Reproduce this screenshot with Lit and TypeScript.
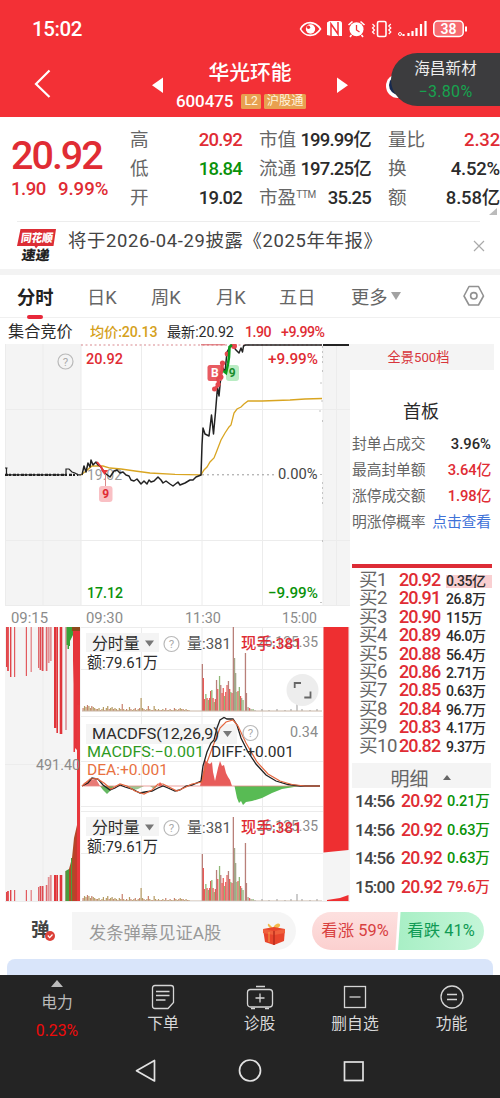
import { LitElement, html, svg, css } from "lit";
import { customElement } from "lit/decorators.js";

const RED = "#e02c34";
const GREEN = "#0a920a";
const INK = "#2b2b2b";
const GREY = "#8b8b8b";

/* Chart label: x, baseline y, drawn width, font size, colour, text. */
const label = (x: number, y: number, w: number, size: number, fill: string, s: string, weight = 400) =>
  svg`<text x=${x} y=${y} textLength=${w} lengthAdjust="spacingAndGlyphs" font-size=${size} font-weight=${weight} fill=${fill}>${s}</text>`;

const question = (x: number, y: number) => svg`
  <circle cx=${x} cy=${y} r="7.5" fill="none" stroke="#b9b9b9" stroke-width="1.2"/>
  <text x=${x} y=${y + 4} text-anchor="middle" font-size="11.5" fill="#aaa">?</text>`;

/* Volume bars: [x, height, colour index]. */
const VOL: [number, number, number][] = [
  [202.3, 47, 2], [203.3, 33, 0], [204.5, 12, 0], [205.8, 17, 1], [207, 13, 0], [208.3, 11, 1], [209.5, 13, 0],
  [210.6, 20, 0], [211.8, 21, 1], [213, 13, 0], [214.2, 9, 1], [215.4, 12, 0], [216.5, 31, 2], [217.7, 22, 0],
  [219.5, 35, 1], [220.7, 26, 2], [222, 18, 0], [223.2, 23, 0], [224.5, 15, 1], [225.7, 19, 0], [227, 26, 0],
  [228.4, 30, 2], [229.6, 22, 0], [230.8, 19, 1], [232, 18, 0], [233.3, 84, 2], [234.5, 53, 3], [235.6, 38, 3],
  [236.8, 19, 1], [238, 20, 0], [239.3, 24, 1], [240.5, 15, 0], [241.6, 13, 3], [243, 11, 1], [245.4, 58, 2],
  [246.4, 18, 2], [248, 4, 3], [249.5, 3, 0], [251, 2, 3], [253, 2, 1],
];
const VOL_COLORS = ["#e85a58", "#8fb878", "#b9807a", "#a3a68a"];
const MORNING = [3, 5, 4, 6, 5, 3, 5, 4, 3, 2, 2, 3, 1, 2, 4, 1, 3, 5, 2, 3, 4, 2, 3, 2, 1, 3, 2, 7, 2, 1, 2, 1, 4, 2, 1, 2, 3, 1, 2, 3,
  13, 3, 2, 1, 2, 5, 2, 1, 1, 5, 2, 1, 2, 1, 1, 2, 1, 3, 1, 1, 2, 1, 1, 3, 2, 1, 2, 3, 2, 2, 1, 2, 1, 1];

const volume = (base: number) => svg`
  <g transform="translate(0 ${base})">
    ${MORNING.map((h, i) => svg`<rect x=${82.5 + i * 1.45} y=${-h} width="1.2" height=${h} fill=${i % 3 ? "#b59a62" : "#c9806c"}/>`)}
    ${VOL.map(([x, h, c]) => svg`<rect x=${x - 0.6} y=${-h} width="1.3" height=${h} fill=${VOL_COLORS[c]}/>`)}
    <path d="M255 -1V0M262 -2V0M269 -1V0M277 -2V0M285 -1V0M291 -2V0M297 -7V0M302 -2V0M310 -1V0M317 -2V0" stroke="#999" stroke-width="1"/>
    <path d="M82 0H322" stroke="#c9b6a6" stroke-width="1"/>
  </g>`;

const volumePanel = (top: number, base: number) => svg`
  <path d="M81 ${top + 0.5}H323M81 ${top + 42.5}H323" class="grid"/>
  ${volume(base)}
  <rect x="86" y=${top + 6} width="73" height="19" fill="#f4f4f4"/>
  ${label(92, top + 22, 47.5, 15.5, INK, "分时量")}
  <path d="M145 ${top + 13.5}h9l-4.5 6z" fill="#777"/>
  ${question(171.5, top + 17)}
  ${label(187, top + 22, 44, 15.5, "#555", "量:381")}
  ${label(257, top + 20, 61, 14.5, GREY, "26,125.35")}
  ${label(241, top + 22, 61, 15.5, RED, "现手:381", 500)}
  ${label(87, top + 41, 71, 15.5, INK, "额:79.61万")}`;

/* Call-auction bars hanging from the top and standing on the bottom: [x, width, hanging end, standing start, colour]. */
const AUCTION: [number, number, number, number, string][] = [
  [6, 1.4, 667, 892, "#e0454a"], [7.2, 1.6, 671, 891, "#e0353a"], [10, 1.4, 677, 890, "#e0454a"], [14, 1.2, 677, 890, "#e25a5e"],
  [25.8, 1.2, 676, 890, "#e25a5e"], [30.6, 1.2, 672, 890, "#e37a7d"], [38, 1.2, 668, 887, "#de6a6e"], [39.6, 1.6, 670, 886, "#de4a50"],
  [41.7, 1.8, 671, 886, "#de4a50"], [45.8, 1.6, 671, 885, "#e0656a"], [47.8, 1.8, 663, 877, "#e29295"], [49.8, 1.9, 661, 875, "#e29295"],
  [54, 2.4, 728, 875, "#e0353a"], [56.4, 1.6, 733, 875, "#e0353a"], [59.7, 2.6, 734, 875, "#e0353a"], [65.3, 1.4, 730, 871, "#d98088"],
];

@customElement("price-charts")
export class PriceCharts extends LitElement {
  static styles = css`
    :host { display: block; width: 350px; height: 568px; }
    svg { display: block; font-family: Roboto, "Noto Sans CJK SC", sans-serif; }
    .grid { stroke: #ececec; stroke-width: 1; fill: none; }
  `;

  render() {
    return html`<svg width="350" height="568" viewBox="0 344 350 568">
      <path d="M5 344H81V605H5zM323 344H350V605H323zM5 627H81V901H5zM323 627H350V901H323z" fill="#f4f4f4"/>
      <path class="grid" d="M5.5 344V605M43 344V605M81 344V605M141.5 344V605M202 344V605M262.5 344V605M323 344V605M5 409.5H350M5 540.5H350M5 605.5H350M141.5 627V901M202 627V901M262.5 627V901M43 627V901M5 764.5H81M81 761.5H323M336.5 344V605"/>
      <path d="M81 345H323" stroke="#d98a8f" stroke-width="1.2" stroke-dasharray="2 2.5"/>
      <path d="M202 474.8H276" stroke="#999" stroke-width="1" stroke-dasharray="2 3"/>
      <path d="M322.5 346V363M322.5 370v3M320 383h3M322 400v4M319 411h4M322.5 420v2M320 474.500h3M322.5 482V505M322.5 540v4M320 602.500h3" stroke="#c4c4c4" stroke-width="1" stroke-dasharray="2 3"/>
      <path d="M201 344.8H225" stroke="#d95a60" stroke-width="1"/>
      ${question(65.5, 361.5)}
      ${label(86, 363.5, 37, 15.5, RED, "20.92", 500)}
      ${label(268, 363.5, 50, 15.5, RED, "+9.99%", 500)}
      ${label(87, 480, 35, 15, "#999", "19.02")}
      ${label(278, 479, 39.5, 15.5, "#444", "0.00%")}
      ${label(87, 598, 36, 15.5, GREEN, "17.12", 500)}
      ${label(268, 598, 50, 15.5, GREEN, "−9.99%", 500)}
      ${label(11, 622.5, 37, 15, GREY, "09:15")}
      ${label(86, 622.5, 37, 15, GREY, "09:30")}
      ${label(185, 622.5, 36, 15, GREY, "11:30")}
      ${label(282, 622.5, 35, 15, GREY, "15:00")}

      <path d="M81 475L86 471L92 466L103 466L110 468L121 469L135 471L150 473L175 474.3L201 474.8L204 470L207 467L210 462L214 458L216 453L221 440L225 433L229 427L231 425L234 413L237 409L241 407L244 404L248 401L262 401L290 400L305 399L322 398.5" fill="none" stroke="#d9a521" stroke-width="1.3"/>
      <path d="M5 474.8H66V469H69L72 472L75 473L78 474.8H81" fill="none" stroke="#222" stroke-width="1.2"/>
      <path d="M5 468h2.5M6.5 468V475" fill="none" stroke="#222" stroke-width="1.2"/>
      <path d="M5 474.8H78" stroke="#222" stroke-width="2.2" stroke-dasharray="3 1 2 2"/>
      <path d="M82 475L84 466L86 472L88 463L90 467L91 460L93 465L96 462L98 465L101 467L104 472L106 474L110 477L114 471L117 470L120 473L123 472L126 475L129 476L131 480L134 481L137 479L141 484L144 481L147 484L149 480L151 482L154 481L158 477L161 480L163 483L166 481L170 484L173 486L178 482L180 485L185 483L190 480L193 480L196 477L201 475L202 445L203 428L205 434L209 436L211.5 415L213.5 434L215.5 412L217.5 387L219 396L221 375L223 368L225 372L227 352L231 345L233 346L236 350L239 353L241 348L242.5 352L243.5 346L245.5 345H322" fill="none" stroke="#222" stroke-width="1.5" stroke-linejoin="round"/>
      <path d="M323 345H349" stroke="#222" stroke-width="2"/>
      <path d="M97 462L101 467L104 472" fill="none" stroke="#e8373d" stroke-width="2"/>
      <path d="M101 470h7l-3.5 5z" fill="#e8373d"/>
      <path d="M105.5 475V487" stroke="#d88" stroke-width="1"/>
      <rect x="99" y="486" width="13.5" height="16" rx="3" fill="#f9c0c4"/>
      <text x="105.7" y="498.3" text-anchor="middle" font-size="12" font-weight="700" fill="#e02c34">9</text>
      <rect x="207.5" y="365" width="15" height="16" rx="2.5" fill="#e85b61"/>
      <path d="M215 389L219 384L217.5 379L222 371L222.5 363" fill="none" stroke="#e5484f" stroke-width="3"/>
      <g fill="#e5484f"><circle cx="214.5" cy="389" r="2.5"/><circle cx="218" cy="384.5" r="2.5"/><circle cx="222.5" cy="363" r="2.6"/><circle cx="227" cy="354" r="2.4"/><circle cx="234" cy="346" r="3"/><circle cx="221" cy="377" r="2.5"/></g>
      <text x="214.8" y="377" text-anchor="middle" font-size="12" font-weight="700" fill="#fff">B</text>
      <rect x="226" y="365" width="13" height="16" rx="3" fill="#b9ecc3"/>
      <text x="232.3" y="377.3" text-anchor="middle" font-size="12" font-weight="700" fill="#198c2c">9</text>
      <path d="M223.5 371L226 373L228 364L229 357L229.5 347L232 345" fill="none" stroke="#0c9a1e" stroke-width="2.6"/>

      <!-- call auction columns -->
      ${AUCTION.map(([x, w, a, b, c]) => svg`<path d="M${x} 627h${w}V${a}h${-w}zM${x} ${b}h${w}V901h${-w}z" fill=${c}/>`)}
      <path d="M66.500 627H73V635L70 641V646H69V649H67.500V645H66.500z" fill="#38a337"/>
      <path d="M65.5 871L69 869V901H65.5z" fill="#4c9c3c"/>
      <path d="M73 630H80V710H79V748L78 757H77V750L75 748V752H73.500V684L73 660z" fill="#e5343a"/>
      <path d="M72 627H80V631H72z" fill="#8d4a1c"/>
      <path d="M69 869L72 858L74 838L77 825V901H69z" fill="#b04a28"/>
      <path d="M74.500 850L77 828V901H74.500z" fill="#c43a2c"/>
      <path d="M78.500 705V901" stroke="#e7373c" stroke-width="3"/>
      <path d="M71.5 858V901" stroke="#4c9c3c" stroke-width="1"/>
      ${label(36, 769.5, 44, 14.5, GREY, "491.40")}
      <path d="M323.5 627H348.5V850L323.5 852.5z" fill="#ee2f31"/>
      <path d="M327 900L340 898L348.5 895V901H327z" fill="#ee2f31"/>

      ${volumePanel(627, 711)}
      <circle cx="302.5" cy="690" r="16" fill="#ededed"/>
      <path d="M294.7 688V683H301M310.5 691.5V697.5H304.3" fill="none" stroke="#666" stroke-width="1.8"/>

      <path class="grid" d="M81 716.5H323M81 806.5H323"/>
      <rect x="86" y="724" width="151" height="20" fill="#f4f4f4"/>
      <path d="M82 786L84 783L90 780L96 779L100 786z" fill="#e87a76"/>
      <path d="M100 786L103 790L107 794L111 790L114 786z" fill="#65b862"/>
      <path d="M126 786L134 790L138 789L144 786zM150 786H158L154 789z" fill="#9cc692"/>
      <path d="M158 786L160 782L163 786z" fill="#e55"/>
      <path d="M200 786L203 772L205 760L208 763L210 764L212 762L213 772L215 781L218 768L220 761L222 766L224 765L226 773L228 777L230 780L232 786z" fill="#e85c5a"/>
      <path d="M234.5 786L237 798L239 803L241 801L243 805L246 802L252 801L262 798L272 793L282 789L300 786z" fill="#58bb54"/>
      <path d="M82 786H320" stroke="#e88a86" stroke-width=".8"/>
      <path d="M82 786L88 783L92 778L98 779L103 785L110 790L115 788L120 785L125 787L132 789L140 793L145 792L152 791L158 788L163 786L168 788L175 791L180 790L186 786L192 785L201 781L203 766L207 752L211 743L214 740L217 728L220 720L224 717.5L227 719L233 719L237 725L241 738L248 752L256 764L266 775L276 781L288 784.5L300 786H320" fill="none" stroke="#222" stroke-width="1.3"/>
      <path d="M82 786L90 779L97 778.5L104 783L111 789L120 784L127 786L135 791L144 794L152 790L158 784L163 784L169 787L177 791L186 787L192 784L202 782L206 765L213 746L220 728L226 722L233 720L238 726L246 743L257 762L268 774L280 781L292 784.5L305 786H320" fill="none" stroke="#e5673f" stroke-width="1.2"/>
      ${label(92, 739, 127, 15.5, INK, "MACDFS(12,26,9)")}
      <path d="M223 731h9l-4.5 6z" fill="#777"/>
      ${question(250.5, 733)}
      ${label(290, 736.5, 28, 14.5, GREY, "0.34")}
      ${label(87, 757, 117, 15.5, "#2e9a1e", "MACDFS:−0.001")}
      ${label(211, 757, 83, 15.5, INK, "DIFF:+0.001")}
      ${label(87, 775, 81, 15.5, "#e8713f", "DEA:+0.001")}
      ${volumePanel(811, 901)}
      <path d="M5 901.5H350" class="grid"/>
    </svg>`;
  }
}

const ORDERS = [
  ["买1", "20.92", "0.35亿"], ["买2", "20.91", "26.8万"], ["买3", "20.90", "115万"], ["买4", "20.89", "46.0万"],
  ["买5", "20.88", "56.4万"], ["买6", "20.86", "2.71万"], ["买7", "20.85", "0.63万"], ["买8", "20.84", "96.7万"],
  ["买9", "20.83", "4.17万"], ["买10", "20.82", "9.37万"],
];
const TRADES = [
  ["14:56", "20.92", "0.21万", "down"], ["14:56", "20.92", "0.63万", "down"],
  ["14:56", "20.92", "0.63万", "down"], ["15:00", "20.92", "79.6万", "up"],
];
const BOARD = [
  ["封单占成交", "3.96%", "ink"], ["最高封单额", "3.64亿", "up"],
  ["涨停成交额", "1.98亿", "up"], ["明涨停概率", "点击查看", "link"],
];

@customElement("order-book")
export class OrderBook extends LitElement {
  static styles = css`
    :host { display: block; width: 150px; font-family: Roboto, "Noto Sans CJK SC", sans-serif; color: #2b2b2b; }
    .full { height: 26px; line-height: 27px; margin-right: 6px; background: #f4f4f4; color: #d8353b; font-size: 13.2px; text-align: center; padding-right: 7px; box-sizing: border-box; }
    .title { height: 61px; padding-top: 27px; box-sizing: border-box; line-height: 30px; width: 142px; text-align: center; font-size: 18px; }
    .facts { height: 133px; padding-right: 9px; }
    .fact { display: flex; justify-content: space-between; height: 26px; line-height: 27px; font-size: 14.8px; padding-left: 2px; letter-spacing: -.1px; white-space: nowrap; }
    .fact .name { color: #666; }
    .ink { color: #2b2b2b; font-weight: 500; letter-spacing: 0; }
    .up { color: #e02c34; }
    .down { color: #0a920a; }
    .fact .up { font-weight: 500; letter-spacing: -.2px; }
    .link { color: #3f72d8; }
    .rule { height: 4px; margin: 0 8px 0 2px; background: #dd2c36; }
    .orders { padding-top: 3px; height: 195px; box-sizing: border-box; }
    .order { display: grid; grid-template-columns: 40px 47px 46px; padding-left: 9px; height: 18.4px; line-height: 18.4px; white-space: nowrap; }
    .side { font-size: 18.6px; color: #666; letter-spacing: -.5px; }
    .price { font-size: 18px; font-weight: 500; color: #e02c34; letter-spacing: -.95px; }
    .amount { font-size: 14px; line-height: 20px; letter-spacing: -.45px; font-weight: 500; }
    .order:first-child .amount { background: linear-gradient(#f9cfd1, #f9cfd1) center / 100% 13px no-repeat; }
    .detail { display: flex; align-items: center; justify-content: center; gap: 14px; width: 139px; margin-left: 2px; padding: 3px 2px 0 0; box-sizing: border-box; height: 25px; background: #f4f4f4; font-size: 19px; color: #666; }
    .detail i { border: 4px solid transparent; border-bottom: 5px solid #666; border-top: 0; }
    .trade { display: grid; grid-template-columns: 46px 46px 50px; padding-left: 5px; height: 28.5px; line-height: 27.5px; white-space: nowrap; }
    .time { font-size: 17px; letter-spacing: -.75px; color: #444; font-weight: 500; }
    .trade .cost { font-size: 17.6px; color: #e02c34; font-weight: 500; letter-spacing: -.8px; }
    .trade .size { font-size: 14.6px; font-weight: 500; letter-spacing: -.15px; }
  `;

  render() {
    return html`
      <div class="full">全景500档</div>
      <div class="title">首板</div>
      <div class="facts">${BOARD.map(([n, v, c]) => html`<div class="fact"><span class="name">${n}</span><span class=${c}>${v}</span></div>`)}</div>
      <div class="rule"></div>
      <div class="orders">${ORDERS.map(([n, p, a]) => html`<div class="order"><span class="side">${n}</span><span class="price">${p}</span><span class="amount">${a}</span></div>`)}</div>
      <div class="detail">明细<i></i></div>
      ${TRADES.map(([t, p, a, c]) => html`<div class="trade"><span class="time">${t}</span><span class="cost">${p}</span><span class="size ${c}">${a}</span></div>`)}
    `;
  }
}

@customElement("app-root")
export class AppRoot extends LitElement {
  static styles = css`
    :host { display: block; position: relative; width: 500px; height: 1098px; overflow: hidden; background: #fff; font-family: Roboto, "Noto Sans CJK SC", sans-serif; color: #2b2b2b; }
    svg { display: block; }
    .top { height: 117px; background: #f33036; color: #fff; }
    .status { display: flex; justify-content: space-between; align-items: center; height: 58px; padding: 0 31px 0 32px; box-sizing: border-box; }
    .clock { font-size: 20.5px; font-weight: 500; letter-spacing: -.4px; }
    .bar { display: grid; grid-template-columns: 152px 196px 152px; height: 59px; }
    .back { padding: 11px 0 0 33px; }
    .stock { display: grid; grid-template-columns: 12px 1fr 12px; }
    .arrow { padding-top: 19px; }
    .name { text-align: center; font-size: 20.8px; font-weight: 500; line-height: 30px; height: 28px; }
    .code { display: flex; align-items: center; gap: 3px; padding-left: 12px; font-size: 17px; line-height: 30px; height: 30px; }
    .code b { font-weight: 500; margin-right: 5px; letter-spacing: -.1px; }
    .tag { background: #e8a050; color: #fff3dc; border-radius: 1.5px; font-size: 12.2px; line-height: 15px; height: 15px; padding: 0 3px; }
    .globe { position: absolute; left: 385px; top: 74px; }
    .toast { position: absolute; left: 391px; top: 53px; width: 109px; height: 53px; box-sizing: border-box; padding: 4px 0 0 0; border-radius: 27px 0 0 27px; background: #3c3c3e; color: #eee; text-align: center; font-size: 15.7px; line-height: 23px; }
    .toast span { display: block; color: #17a34f; font-size: 16px; letter-spacing: .3px; }

    .quote { display: grid; grid-template-columns: 130px 112px 17px 112px 17px 112px; height: 104px; }
    .last { padding: 15px 0 0 11px; color: #e02c34; white-space: nowrap; }
    .last strong { display: block; font-size: 39.5px; font-weight: 500; line-height: 47px; letter-spacing: -2px; }
    .last span { font-size: 18.6px; line-height: 20px; margin-right: 12px; letter-spacing: -.5px; display: inline-block; font-weight: 500; }
    .last span + span { margin: 0; letter-spacing: 0; }
    .col { padding-top: 9px; }
    .item { display: flex; justify-content: space-between; height: 29px; line-height: 29px; white-space: nowrap; font-size: 18.6px; color: #666; }
    .item b { font-weight: 500; color: #2b2b2b; font-size: 18.5px; letter-spacing: -.8px; }
    .col:last-child b { letter-spacing: -.2px; }
    .item b.up { color: #e02c34; }
    .item b.down { color: #0a920a; }
    .item sup { font-size: 10px; vertical-align: 6px; line-height: 0; letter-spacing: -.3px; }
    .corner { position: absolute; left: 489px; top: 208px; }
    .news { display: flex; align-items: flex-start; margin: 0 20px 0 17px; border-top: 1px solid #ededed; height: 47px; }
    .badge { padding-top: 6px; width: 51px; }
    .news p { flex: 1; margin: 0; font-size: 18.4px; line-height: 37px; color: #444; letter-spacing: .65px; white-space: nowrap; }
    .close { padding: 18px 0 0; margin-right: -5px; }
    .gap { height: 6px; background: #f3f3f3; }
    .tabs { display: grid; grid-template-columns: 87px 64px 65px 63px 72px 112px 37px; align-items: center; height: 43px; box-sizing: border-box; border-bottom: 1px solid #f0f0f0; font-size: 18.3px; color: #666; }
    .tab:first-child { padding-left: 17px; color: #222; font-weight: 700; position: relative; }
    .tab:first-child::after { content: ""; position: absolute; left: 27px; top: 32px; width: 16px; height: 4px; border-radius: 2px; background: #e8283a; }
    .tab.more { display: flex; align-items: center; gap: 3px; padding-left: 0; }
    .tab.more i { border: 5px solid transparent; border-top: 8px solid #a2a2a2; border-bottom: 0; }
    .legend { display: grid; grid-template-columns: 82px 77px 78px 36px 60px; height: 26px; line-height: 28px; padding-left: 8px; font-size: 14.2px; white-space: nowrap; letter-spacing: -.1px; }
    .legend .kind { font-size: 16.2px; letter-spacing: 0; }
    .avg { color: #d5a11c; font-weight: 500; }
    .rise { color: #e02c34; font-weight: 500; letter-spacing: -.5px; }
    .main { display: grid; grid-template-columns: 350px 150px; height: 568px; }
    .chat { display: flex; height: 38px; padding: 0 16px 0 16px; }
    .chatbox { display: flex; align-items: center; width: 280px; height: 38px; border-radius: 19px; background: linear-gradient(90deg, #fff 56px, #f5f5f5 56px); }
    .danmu { width: 73px; padding-left: 15px; box-sizing: border-box; }
    .hint { flex: 1; font-size: 17.3px; color: #999; }
    .gift { margin-right: 10px; padding-top: 5px; }
    .poll { display: flex; margin-left: 16px; width: 172px; font-size: 16.4px; line-height: 38px; letter-spacing: 0; border-radius: 19px; overflow: hidden; white-space: nowrap; }
    .bull { width: 86px; text-align: center; color: #d8403f; background: linear-gradient(#fde0df, #fbd0cf); clip-path: polygon(0 0, 100% 0, 97% 100%, 0 100%); }
    .bear { width: 86px; text-align: center; color: #109a54; background: linear-gradient(90deg, #a8efc5, #c4f5d8); clip-path: polygon(3% 0, 100% 0, 100% 100%, 0 100%); }
    .banner { margin: 9px 7px 0; height: 16px; border-radius: 8px 8px 0 0; background: #d9e5fa; }
    .dock { height: 123px; background: #242424; }
    .nav { display: grid; grid-template-columns: 114px 98px 95px 96px 97px; height: 70px; color: #d8d8d8; font-size: 15.8px; }
    .entry { display: flex; flex-direction: column; align-items: center; padding-top: 9px; line-height: 24px; gap: 1.5px; }
    .sector { padding-top: 5px; gap: 3px; line-height: 25px; color: #bbb; }
    .sector span { color: #f00b0b; }
    .sector i { border: 6px solid transparent; border-bottom: 7px solid #bbb; border-top: 0; }
    .keys { display: grid; grid-template-columns: repeat(3, 104px); justify-content: center; justify-items: center; padding-top: 13px; }
  `;

  private item(name: unknown, value: string, tone = "") {
    return html`<div class="item"><span>${name}</span><b class=${tone}>${value}</b></div>`;
  }

  private entry(text: string, icon: unknown) {
    return html`<div class="entry"><svg width="28" height="26" fill="none" stroke="#d5d5d5" stroke-width="1.3">${icon}</svg><span>${text}</span></div>`;
  }

  render() {
    return html`
      <header class="top">
        <div class="status">
          <span class="clock">15:02</span>
          <svg width="170" height="20" viewBox="298 19 170 20" fill="none" stroke="#fff" stroke-width="1.6">
            <path d="M299.500 29C304 20.500 314 20.500 319.500 29C314 37.500 304 37.500 299.500 29z"/>
            <circle cx="309.500" cy="29" r="4.700" fill="#fff" stroke="none"/><circle cx="307.500" cy="27.300" r="1.700" fill="#f33036" stroke="none"/>
            <path d="M328.500 21H338.500Q341 21 341 23.500V36H330.500L326 35V22.500z" fill="#fff" stroke="none"/>
            <path d="M330 36V24L337 34V22" stroke="#f33036" stroke-width="1.500"/>
            <circle cx="355.500" cy="29.300" r="7" fill="#fff" stroke="none"/>
            <path d="M347.500 25L351.500 21.500M363.500 25L359.500 21.500M350.500 35L349 37M360.500 35L362 37"/>
            <path d="M355.500 25V30L358.500 32" stroke="#f33036" stroke-width="1.300"/>
            <rect x="376.500" y="21.500" width="8.500" height="15" rx="1.500"/>
            <path d="M371.500 24l2 2-2 2 2 2-2 2 2 2M389.800 24l-2 2 2 2-2 2 2 2-2 2" stroke-width="1.200"/>
            <path d="M402.500 36V34M407.500 36V33M411.500 36V31M415.500 36V28M420 36V24M424.500 36V21" stroke-width="2.200"/>
            <circle cx="399" cy="34" r="1.500" stroke-width="1"/>
            <rect x="432.800" y="21" width="29.400" height="15.500" rx="4" fill="#f76b70" stroke-width="1.500"/>
            <path d="M465 26.500V31.500" stroke-width="2"/>
            <text x="447.500" y="33.800" text-anchor="middle" font-size="14" font-weight="600" fill="#fff" stroke="none">38</text>
          </svg>
        </div>
        <div class="bar">
          <div class="back"><svg width="20" height="30" fill="none" stroke="#fff" stroke-width="2.200"><path d="M16.500 1.500L3 15L16.500 28"/></svg></div>
          <div class="stock">
            <svg class="arrow" width="12" height="16"><path d="M11 .5V16L0 8.200z" fill="#fff"/></svg>
            <div>
              <div class="name">华光环能</div>
              <div class="code"><b>600475</b><span class="tag">L2</span><span class="tag">沪股通</span></div>
            </div>
            <svg class="arrow" width="12" height="16"><path d="M1 .5V16L12 8.200z" fill="#fff"/></svg>
          </div>
        </div>
      </header>
      <svg class="globe" width="26" height="26"><circle cx="13" cy="12" r="12" fill="#fff"/><circle cx="14" cy="11" r="10" fill="#16294f"/></svg>
      <div class="toast">海昌新材<span>−3.80%</span></div>

      <section class="quote">
        <div class="last"><strong>20.92</strong><span>1.90</span><span>9.99%</span></div>
        <div class="col">${this.item("高", "20.92", "up")}${this.item("低", "18.84", "down")}${this.item("开", "19.02")}</div>
        <div></div>
        <div class="col">${this.item("市值", "199.99亿")}${this.item("流通", "197.25亿")}${this.item(html`市盈<sup>TTM</sup>`, "35.25")}</div>
        <div></div>
        <div class="col">${this.item("量比", "2.32", "up")}${this.item("换", "4.52%")}${this.item("额", "8.58亿")}</div>
      </section>
      <svg class="corner" width="8" height="8"><path d="M8 0V7H0z" fill="#bbb"/></svg>

      <section class="news">
        <div class="badge">
          <svg width="40" height="36">
            <path d="M3.500 1H39L36.500 18H21L19 20.500L17.500 18H0z" fill="#dc2d35"/>
            <g transform="skewX(-8)" font-weight="900">
              <text x="5.500" y="14.500" font-size="11.500" textLength="32" lengthAdjust="spacingAndGlyphs" fill="#fff">同花顺</text>
              <text x="8.500" y="32.500" font-size="13.500" textLength="28" lengthAdjust="spacingAndGlyphs" fill="#222">速递</text>
            </g>
          </svg>
        </div>
        <p>将于2026-04-29披露《2025年年报》</p>
        <svg class="close" width="12" height="12" stroke="#aaa" stroke-width="1.200"><path d="M1 1L11 11M11 1L1 11"/></svg>
      </section>
      <div class="gap"></div>

      <nav class="tabs">
        <span class="tab">分时</span><span class="tab">日K</span><span class="tab">周K</span><span class="tab">月K</span><span class="tab">五日</span>
        <span class="tab more">更多<i></i></span>
        <svg width="22" height="22" fill="none" stroke="#919191" stroke-width="1.600"><path d="M6 1.500H15.500L20.500 11L15.500 20H6L1 11z" stroke-linejoin="round"/><circle cx="10.800" cy="10.800" r="3.200"/></svg>
      </nav>
      <div class="legend">
        <span class="kind">集合竞价</span><span class="avg">均价:20.13</span><span>最新:20.92</span><span class="rise">1.90</span><span class="rise">+9.99%</span>
      </div>
      <main class="main"><price-charts></price-charts><order-book></order-book></main>

      <section class="chat">
        <div class="chatbox">
          <div class="danmu">
            <svg width="26" height="26"><text x="0" y="18" font-size="18.500" font-weight="700" fill="#444">弹</text><circle cx="19" cy="18" r="5" fill="#dc4038"/><path d="M16.800 17.500L18.700 19.700L21.500 16.500" fill="none" stroke="#fff" stroke-width="1.200"/></svg>
          </div>
          <span class="hint">发条弹幕见证A股</span>
          <svg class="gift" width="24" height="24">
            <path d="M11 7C5 6 5 1 7 2L11 6C14 0 19 1 18 4C17 6 14 7 11 7z" fill="#f3b94c"/>
            <path d="M1 7L12 5L23 7L22 19L12 23L3 20z" fill="#e8452c"/><path d="M1 7L12 9L23 7V11L12 13L1 11z" fill="#f0603c"/>
            <path d="M12 9V23" stroke="#b82c1c" stroke-width="1.500"/><path d="M7 10V20" stroke="#f2a344" stroke-width="1"/>
          </svg>
        </div>
        <div class="poll"><div class="bull">看涨 59%</div><div class="bear">看跌 41%</div></div>
      </section>
      <div class="banner"></div>

      <footer class="dock">
        <div class="nav">
          <div class="entry sector"><i></i>电力<span>0.23%</span></div>
          ${this.entry("下单", svg`<path d="M6 1.500H22Q24.500 1.500 24.500 4V18.500L19 24.500H6Q3.500 24.500 3.500 22V4Q3.500 1.500 6 1.500zM7 7.500H20.500M7 11.500H20.500M7 16H16.500"/>`)}
          ${this.entry("诊股", svg`<rect x="1.500" y="5.500" width="25" height="17.500" rx="3"/><path d="M10 2.500H19M5 24.500H9M19 24.500H23M14 9.500V18.500M9.500 14H18.500"/>`)}
          ${this.entry("删自选", svg`<rect x="3.500" y="2.500" width="21" height="21"/><path d="M8.500 13H19.500"/>`)}
          ${this.entry("功能", svg`<circle cx="14" cy="13" r="11"/><path d="M9 10.500H19M9 15.500H19"/>`)}
        </div>
        <div class="keys">
          <svg width="24" height="26" fill="none" stroke="#e2e2e2" stroke-width="1.700"><path d="M20.500 2.500V23L2.500 12.700z" stroke-linejoin="round"/></svg>
          <svg width="24" height="26" fill="none" stroke="#e2e2e2" stroke-width="1.700"><circle cx="12" cy="12.500" r="10.500"/></svg>
          <svg width="24" height="26" fill="none" stroke="#e2e2e2" stroke-width="1.700"><rect x="2.500" y="4" width="18.500" height="18.500"/></svg>
        </div>
      </footer>
    `;
  }
}
